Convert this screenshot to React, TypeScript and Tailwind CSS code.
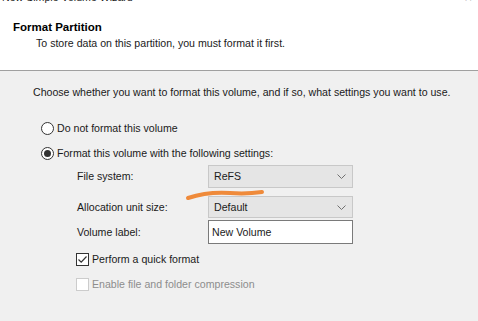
import React from "react";

const font = { fontFamily: '"Liberation Sans", Arial, sans-serif' };

function Chevron() {
  return (
    <svg width="9" height="5" viewBox="0 0 9 5" className="shrink-0">
      <path d="M0.5 0.5 L4.5 4.5 L8.5 0.5" fill="none" stroke="#707070" strokeWidth="1" />
    </svg>
  );
}

function Radio({ checked }: { checked?: boolean }) {
  return (
    <span className="w-[13px] h-[13px] rounded-full border border-[#333] bg-white flex items-center justify-center shrink-0">
      {checked && <span className="w-[7px] h-[7px] rounded-full bg-[#333]" />}
    </span>
  );
}

export default function App() {
  return (
    <div
      className="w-[478px] h-[321px] overflow-hidden bg-[#f0f0f0] text-[#1a1a1a] text-[10.6px] leading-none flex flex-col relative"
      style={font}
    >
      <div className="h-[71px] bg-white border-b border-[#a0a0a0] flex flex-col relative shrink-0">
        <div className="absolute left-[2px] top-[-8px] text-[10.6px] text-[#222]">New Simple Volume Wizard</div>
        <div className="absolute right-[6px] top-[-9px] text-[13px] text-[#444]">×</div>
        <div className="pl-[13px] pt-[22px] font-bold text-[11.5px] text-black">Format Partition</div>
        <div className="pl-[36px] pt-[4px]">To store data on this partition, you must format it first.</div>
      </div>
      <div className="pl-[33px] pt-[14px] h-[28px] flex items-end">
        <span className="h-[14px] flex items-center">Choose whether you want to format this volume, and if so, what settings you want to use.</span>
      </div>
      <div className="pl-[41px] pt-[22px] flex flex-col gap-[11px]">
        <div className="h-[14px] flex items-center gap-[3px]">
          <Radio />
          <span>Do not format this volume</span>
        </div>
        <div className="h-[14px] flex items-center gap-[3px]">
          <Radio checked />
          <span>Format this volume with the following settings:</span>
        </div>
      </div>
      <div className="pl-[77px] pt-[5px] flex flex-col">
        <div className="flex items-center h-[23px]">
          <span className="w-[131px]">File system:</span>
          <div className="w-[145px] h-[23px] border border-[#c8c8c8] bg-[#e5e5e5] flex items-center justify-between pl-[5px] pr-[6px]">
            <span>ReFS</span>
            <Chevron />
          </div>
        </div>
        <div className="flex items-center h-[22px] mt-[8px]">
          <span className="w-[131px]">Allocation unit size:</span>
          <div className="w-[145px] h-[22px] border border-[#c8c8c8] bg-[#e5e5e5] flex items-center justify-between pl-[5px] pr-[6px]">
            <span>Default</span>
            <Chevron />
          </div>
        </div>
        <div className="flex items-center h-[24px] mt-[2px]">
          <span className="w-[131px]">Volume label:</span>
          <div className="w-[145px] h-[24px] border border-[#7a7a7a] bg-white flex items-center pl-[3px]">
            <span>New Volume</span>
          </div>
        </div>
      </div>
      <div className="pl-[76px] pt-[8px] flex flex-col gap-[11px]">
        <div className="h-[14px] flex items-center gap-[3px]">
          <span className="w-[13px] h-[13px] border border-[#333] bg-white flex items-center justify-center">
            <svg width="11" height="11" viewBox="0 0 11 11">
              <path d="M1.5 5.5 L4.2 8.2 L9.5 2.5" fill="none" stroke="#333" strokeWidth="1.2" />
            </svg>
          </span>
          <span>Perform a quick format</span>
        </div>
        <div className="h-[14px] flex items-center gap-[3px]">
          <span className="w-[13px] h-[13px] border border-[#cccccc] bg-white" />
          <span className="text-[#8d8d8d]">Enable file and folder compression</span>
        </div>
      </div>
      <svg className="absolute left-0 top-0 pointer-events-none" width="478" height="321">
        <path
          d="M188 198 C 200 194, 215 192, 230 193 S 255 193, 262 192"
          fill="none"
          stroke="#ef8a3a"
          strokeWidth="4"
          strokeLinecap="round"
        />
      </svg>
    </div>
  );
}
